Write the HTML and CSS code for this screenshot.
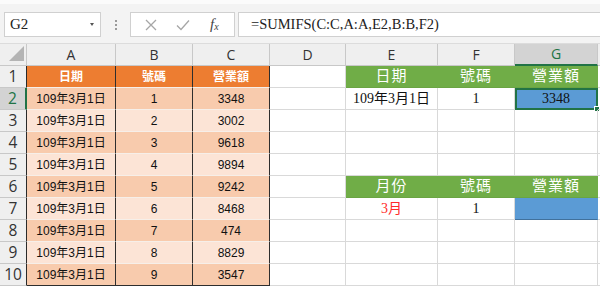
FILE: index.html
```html
<!DOCTYPE html>
<html lang="zh-Hant">
<head>
<meta charset="utf-8">
<link rel="stylesheet" href="styles.css">
</head>
<body>
<div class="toolbar">
  <div class="namebox"><span class="nb-text">G2</span><span class="nb-arrow"></span></div>
  <div class="grip"><i></i><i></i><i></i></div>
  <div class="fxbox">
    <svg class="ic" width="14" height="14" viewBox="0 0 14 14"><path d="M2 2 L12 12 M12 2 L2 12" stroke="#a6a6a6" stroke-width="1.3" fill="none"/></svg>
    <svg class="ic" width="16" height="14" viewBox="0 0 16 14"><path d="M2 7.5 L6 11.5 L14 2.5" stroke="#a6a6a6" stroke-width="1.3" fill="none"/></svg>
    <span class="fx">f<sub>x</sub></span>
  </div>
  <div class="formula">=SUMIFS(C:C,A:A,E2,B:B,F2)</div>
</div>

<div class="sheet">
  <div class="row hdr">
    <div class="corner"><svg width="18" height="16" viewBox="0 0 18 16"><polygon points="17,0 17,15 2,15" fill="#b4b4b4"/></svg></div>
    <div class="ch">A</div><div class="ch">B</div><div class="ch">C</div><div class="ch">D</div>
    <div class="ch">E</div><div class="ch">F</div><div class="ch sel">G</div><div class="ch tail"></div>
  </div>

  <div class="row">
    <div class="rh">1</div>
    <div class="c oh">日期</div><div class="c oh">號碼</div><div class="c oh">營業額</div>
    <div class="c"></div>
    <div class="c gh">日期</div><div class="c gh">號碼</div><div class="c gh">營業額</div><div class="c tail"></div>
  </div>
  <div class="row">
    <div class="rh rsel">2</div>
    <div class="c o1">109年3月1日</div><div class="c o1">1</div><div class="c o1">3348</div>
    <div class="c"></div>
    <div class="c s">109年3月1日</div><div class="c s">1</div><div class="c s blue active">3348<span class="handle"></span></div><div class="c tail"></div>
  </div>
  <div class="row">
    <div class="rh">3</div>
    <div class="c o2">109年3月1日</div><div class="c o2">2</div><div class="c o2">3002</div>
    <div class="c"></div><div class="c"></div><div class="c"></div><div class="c"></div><div class="c tail"></div>
  </div>
  <div class="row">
    <div class="rh">4</div>
    <div class="c o1">109年3月1日</div><div class="c o1">3</div><div class="c o1">9618</div>
    <div class="c"></div><div class="c"></div><div class="c"></div><div class="c"></div><div class="c tail"></div>
  </div>
  <div class="row">
    <div class="rh">5</div>
    <div class="c o2">109年3月1日</div><div class="c o2">4</div><div class="c o2">9894</div>
    <div class="c"></div><div class="c"></div><div class="c"></div><div class="c"></div><div class="c tail"></div>
  </div>
  <div class="row">
    <div class="rh">6</div>
    <div class="c o1">109年3月1日</div><div class="c o1">5</div><div class="c o1">9242</div>
    <div class="c"></div>
    <div class="c gh">月份</div><div class="c gh">號碼</div><div class="c gh">營業額</div><div class="c tail"></div>
  </div>
  <div class="row">
    <div class="rh">7</div>
    <div class="c o2">109年3月1日</div><div class="c o2">6</div><div class="c o2">8468</div>
    <div class="c"></div>
    <div class="c s red">3月</div><div class="c s">1</div><div class="c s blue"></div><div class="c tail"></div>
  </div>
  <div class="row">
    <div class="rh">8</div>
    <div class="c o1">109年3月1日</div><div class="c o1">7</div><div class="c o1">474</div>
    <div class="c"></div><div class="c"></div><div class="c"></div><div class="c"></div><div class="c tail"></div>
  </div>
  <div class="row">
    <div class="rh">9</div>
    <div class="c o2">109年3月1日</div><div class="c o2">8</div><div class="c o2">8829</div>
    <div class="c"></div><div class="c"></div><div class="c"></div><div class="c"></div><div class="c tail"></div>
  </div>
  <div class="row">
    <div class="rh">10</div>
    <div class="c o1 last">109年3月1日</div><div class="c o1 last">9</div><div class="c o1 last">3547</div>
    <div class="c"></div><div class="c"></div><div class="c"></div><div class="c"></div><div class="c tail"></div>
  </div>
</div>
</body>
</html>
```

FILE: styles.css
```css
* { box-sizing: border-box; }
html, body { margin: 0; padding: 0; }
body {
  width: 600px;
  height: 286px;
  overflow: hidden;
  background: #fff;
  font-family: "Liberation Sans", "Noto Sans CJK TC", sans-serif;
}

.toolbar {
  height: 44px;
  background: #f3f3f3;
  border-top: 4px solid #fbfbfb;
  border-bottom: 1px solid #dcdcdc;
  display: flex;
  align-items: flex-start;
  padding-top: 8px;
  padding-left: 4px;
}
.namebox {
  width: 97px;
  height: 25px;
  background: #fff;
  border: 1px solid #d0d0d0;
  display: flex;
  align-items: center;
  justify-content: space-between;
  padding: 0 6px 0 5px;
}
.nb-text {
  font-family: "Liberation Serif", serif;
  font-size: 15px;
  color: #222;
}
.nb-arrow {
  width: 0; height: 0;
  border-left: 2.5px solid transparent;
  border-right: 2.5px solid transparent;
  border-top: 3px solid #555;
}
.grip {
  width: 29px;
  height: 25px;
  display: flex;
  flex-direction: column;
  align-items: center;
  justify-content: center;
  gap: 2px;
}
.grip i {
  display: block;
  width: 2px; height: 2px;
  background: #9a9a9a;
}
.fxbox {
  width: 105px;
  height: 25px;
  background: #fff;
  border: 1px solid #d0d0d0;
  display: flex;
  align-items: center;
  padding-left: 13px;
  gap: 17px;
}
.ic { display: block; }
.fx {
  font-family: "Liberation Serif", serif;
  font-style: italic;
  font-size: 15px;
  color: #444;
  margin-left: 2px;
}
.fx sub { font-size: 10px; vertical-align: -1px; }
.formula {
  flex: 1;
  margin-left: 3px;
  height: 25px;
  background: #fff;
  border: 1px solid #d0d0d0;
  border-right: none;
  padding-left: 12px;
  font-family: "Liberation Serif", serif;
  font-size: 14.5px;
  line-height: 23px;
  color: #222;
}

.sheet { display: flex; flex-direction: column; }
.row {
  display: grid;
  grid-template-columns: 27px 89px 77px 77px 76px 92px 77px 83px 1fr;
  grid-template-rows: 22px;
  height: 22px;
  flex: none;
}
.row > div {
  display: flex;
  align-items: center;
  justify-content: center;
  position: relative;
  line-height: 1;
  min-height: 0;
}

.hdr { background: #efefef; }
.corner {
  background: #efefef;
  border-right: 1px solid #c8c8c8;
  border-bottom: 1px solid #c8c8c8;
  align-items: flex-end !important;
  justify-content: flex-end !important;
  padding: 0 1px 3px 0;
}
.ch {
  background: #efefef;
  border-right: 1px solid #c8c8c8;
  border-bottom: 1px solid #c8c8c8;
  font-family: "Open Sans", "Liberation Sans", sans-serif;
  font-size: 14px;
  color: #333;
}
.ch.sel {
  background: #d3d3d3;
  color: #217346;
  border-bottom: 2px solid #217346;
}
.ch.tail { border-right: none; }

.rh {
  background: #efefef;
  border-right: 1px solid #2a2a2a;
  border-bottom: 1px solid #c8c8c8;
  font-family: "Open Sans", "Liberation Sans", sans-serif;
  font-size: 15.5px;
  color: #333;
}
.rh.rsel {
  background: #d3d3d3;
  color: #217346;
  border-right: 2px solid #217346;
}

.c {
  border-right: 1px solid #d9d9d9;
  border-bottom: 1px solid #d9d9d9;
  font-size: 12px;
  color: #111;
}
.c.tail { border-right: none; }

.oh, .o1, .o2 {
  border-right: 1px solid #2e2e2e;
  border-bottom: 1px solid #f6efe9;
}
.oh { background: #ed7d31; color: #fff; font-weight: bold; }
.o1 { background: #f8cbad; }
.o2 { background: #fce4d6; }
.last { border-bottom: 1px solid #2e2e2e; }

.gh {
  background: #70ad47;
  border-right: 1px solid #70ad47;
  border-bottom: 1px solid #6aa443;
  color: #fff;
  font-family: "Liberation Serif", "Noto Sans CJK TC", serif;
  font-size: 15px;
  letter-spacing: 1px;
}
.s {
  font-family: "Liberation Serif", "Noto Sans CJK TC", serif;
  font-size: 14px;
  color: #111;
}
.red { color: #ff2b2b; }
.blue {
  background: #5b9bd5;
  border-right: 1px solid #5b9bd5;
  border-bottom: 1px solid #41719c;
}
.active {
  outline: 2px solid #217346;
  outline-offset: -2px;
}
.handle {
  position: absolute;
  right: -3px;
  bottom: -3px;
  width: 6px;
  height: 6px;
  background: #217346;
  border: 1px solid #fff;
}
```
